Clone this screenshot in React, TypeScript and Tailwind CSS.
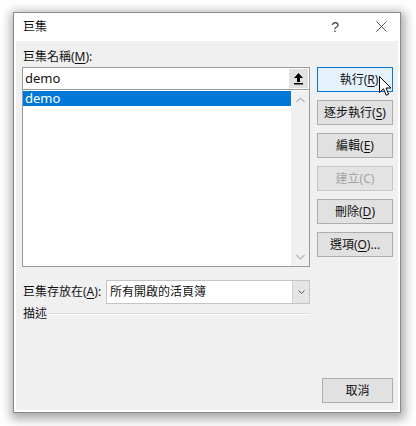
import React from "react";

const Btn = ({
  children,
  primary,
  disabled,
  className = "",
}: {
  children: React.ReactNode;
  primary?: boolean;
  disabled?: boolean;
  className?: string;
}) => (
  <div
    className={
      "h-[25px] flex items-center justify-center border text-[12px] leading-[16px] " +
      (primary
        ? "bg-[#e5f1fb] border-[#0078d7] text-[#111]"
        : disabled
        ? "bg-[#e3e3e3] border-[#c6c6c6] text-[#a3a3a3]"
        : "bg-[#e1e1e1] border-[#adadad] text-[#111]") +
      " " +
      className
    }
  >
    {children}
  </div>
);

const U = ({ children }: { children: React.ReactNode }) => (
  <span className="underline underline-offset-[2px]">{children}</span>
);

export default function App() {
  return (
    <div className="relative w-[416px] h-[426px] overflow-hidden bg-white font-['Noto_Sans','Noto_Sans_CJK_TC',sans-serif] pl-[13px] pt-[12px]">
      <div className="w-[388px] h-[401px] border border-[#8a8a8a] bg-white flex flex-col shadow-[1px_3px_10px_3px_rgba(0,0,0,0.35)]">
        {/* Title bar */}
        <div className="h-[28px] flex items-center pl-[9px] pr-[13px] text-[12px] text-[#111]">
          <span>巨集</span>
          <span className="ml-auto mr-[37px] text-[14px] text-[#444] font-['Liberation_Sans',sans-serif]">?</span>
          <svg width="11" height="11" viewBox="0 0 11 11" className="mb-[1px]">
            <path d="M0.5 0.5 L10.5 10.5 M10.5 0.5 L0.5 10.5" stroke="#444" strokeWidth="0.9" />
          </svg>
        </div>
        {/* Body */}
        <div className="flex-1 mx-[2px] mb-[2px] bg-[#f0f0f0] flex pl-[6px] pr-[4px]">
          {/* Left column */}
          <div className="w-[288px] flex flex-col pt-[8px]">
            <div className="h-[16px] leading-[16px] text-[12px] text-[#111] pl-[1px]">
              巨集名稱(<U>M</U>):
            </div>
            <div className="mt-[2px] h-[23px] bg-white border border-[#9a9a9a] flex items-center pl-[2px]">
              <span className="text-[13px] text-[#111]">demo</span>
              <div className="ml-auto mr-[1px] w-[19px] h-[19px] bg-[#e1e1e1] flex items-center justify-center">
                <svg width="9" height="12" viewBox="0 0 9 12">
                  <path d="M4.5 0 L9 5 L6 5 L6 9 L3 9 L3 5 L0 5 Z" fill="#000" />
                  <rect x="0" y="10" width="9" height="1.5" fill="#000" />
                </svg>
              </div>
            </div>
            <div className="h-[177px] bg-white border border-t-0 border-[#9a9a9a] flex pt-[1px]">
              <div className="flex-1">
                <div className="h-[15px] bg-[#0078d7] text-white text-[13px] leading-[15px] pl-[2px]">demo</div>
              </div>
              <div className="w-[18px] bg-[#f0f0f0] flex flex-col items-center justify-between py-[6px]">
                <svg width="9" height="6" viewBox="0 0 9 6">
                  <path d="M0.5 5 L4.5 1 L8.5 5" stroke="#b4b4b4" strokeWidth="1.2" fill="none" />
                </svg>
                <svg width="9" height="6" viewBox="0 0 9 6">
                  <path d="M0.5 1 L4.5 5 L8.5 1" stroke="#b4b4b4" strokeWidth="1.2" fill="none" />
                </svg>
              </div>
            </div>
            <div className="mt-[13px] h-[24px] flex items-center">
              <div className="w-[84px] text-[12px] text-[#111] pl-[1px]">
                巨集存放在(<U>A</U>):
              </div>
              <div className="flex-1 h-full bg-white border border-[#c4c4c4] flex items-center pl-[3px]">
                <span className="text-[12px] text-[#111]">所有開啟的活頁簿</span>
                <div className="ml-auto w-[17px] h-full bg-[#e5e5e5] border-l border-[#cfcfcf] flex items-center justify-center">
                  <svg width="7" height="4" viewBox="0 0 7 4">
                    <path d="M0.5 0.5 L3.5 3.5 L6.5 0.5" stroke="#555" strokeWidth="1" fill="none" />
                  </svg>
                </div>
              </div>
            </div>
            <div className="mt-[2px] h-[16px] flex items-center">
              <span className="text-[12px] text-[#111] pl-[1px] leading-[16px]">描述</span>
              <div className="flex-1 ml-[1px] h-[1px] bg-[#dcdcdc] border-b border-white box-content"></div>
            </div>
          </div>
          {/* Right column */}
          <div className="ml-[7px] w-[76px] flex flex-col pt-[26px] pb-[7px] gap-[8px]">
            <Btn primary>
              <span className="pl-[8px]">執行(<U>R</U>)</span>
            </Btn>
            <Btn>
              逐步執行(<U>S</U>)
            </Btn>
            <Btn>
              編輯(<U>E</U>)
            </Btn>
            <Btn disabled>建立(C)</Btn>
            <Btn>
              刪除(<U>D</U>)
            </Btn>
            <Btn>
              選項(<U>O</U>)...
            </Btn>
            <Btn className="mt-auto w-[71px] self-end">取消</Btn>
          </div>
        </div>
      </div>
      {/* Mouse cursor */}
      <svg
        className="absolute left-[379px] top-[76px]"
        width="13"
        height="21"
        viewBox="0 0 13 21"
      >
        <path
          d="M0.5 0.5 L0.5 16.5 L4.5 12.8 L7.2 19.2 L9.6 18.2 L7 12 L12 12 Z"
          fill="#fff"
          stroke="#000"
          strokeWidth="1"
          strokeLinejoin="round"
        />
      </svg>
    </div>
  );
}
